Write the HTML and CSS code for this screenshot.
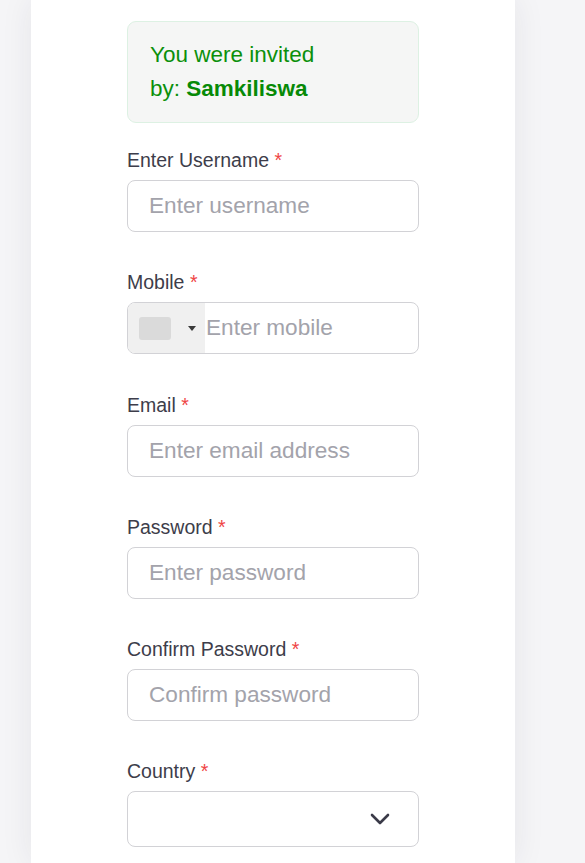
FILE: index.html
```html
<!DOCTYPE html>
<html lang="en">
<head>
<meta charset="utf-8">
<title>Register</title>
<link rel="stylesheet" href="styles.css">
</head>
<body>
<div class="page">
  <div class="card">
    <div class="form">
      <div class="invite">
        <p class="invite-line">You were invited</p>
        <p class="invite-line">by: <strong>Samkiliswa</strong></p>
      </div>

      <div class="field">
        <label class="label">Enter Username <span class="req">*</span></label>
        <div class="input"><span class="ph">Enter username</span></div>
      </div>

      <div class="field">
        <label class="label">Mobile <span class="req">*</span></label>
        <div class="input phone">
          <div class="flagbox">
            <span class="flag"></span>
            <span class="caret"></span>
          </div>
          <span class="ph tight">Enter mobile</span>
        </div>
      </div>

      <div class="field">
        <label class="label">Email <span class="req">*</span></label>
        <div class="input"><span class="ph">Enter email address</span></div>
      </div>

      <div class="field">
        <label class="label">Password <span class="req">*</span></label>
        <div class="input"><span class="ph">Enter password</span></div>
      </div>

      <div class="field">
        <label class="label">Confirm Password <span class="req">*</span></label>
        <div class="input"><span class="ph">Confirm password</span></div>
      </div>

      <div class="field">
        <label class="label">Country <span class="req">*</span></label>
        <div class="input select">
          <svg class="chev" width="20" height="12" viewBox="0 0 20 12"><path d="M2 2 L10 10 L18 2" fill="none" stroke="#3a3a48" stroke-width="2.6" stroke-linecap="round" stroke-linejoin="round"/></svg>
        </div>
      </div>
    </div>
  </div>
</div>
</body>
</html>
```

FILE: styles.css
```css
html, body {
  margin: 0;
  padding: 0;
  background: #f5f5f7;
  font-family: "Liberation Sans", Arial, sans-serif;
}
.page {
  height: 863px;
  overflow: hidden;
}
.card {
  margin-left: 31px;
  width: 484px;
  min-height: 863px;
  background: #ffffff;
  box-shadow: 0 0 30px rgba(40, 40, 70, 0.08);
}
.form {
  width: 292px;
  margin: 0 auto;
  padding-top: 21px;
}
.invite {
  background: #f5f6f5;
  border: 1px solid #ddf1e3;
  border-radius: 9px;
  padding: 16px 22px;
}
.invite-line {
  margin: 0;
  color: #0b900b;
  font-size: 22.5px;
  line-height: 34px;
}
.invite-line strong {
  font-weight: 700;
  color: #078a07;
}
.field {
  margin-top: 23px;
}
.field + .field {
  margin-top: 36.25px;
}
.label {
  display: block;
  color: #3d3d4a;
  font-size: 19.5px;
  line-height: 28px;
  margin-bottom: 6px;
}
.req {
  color: #ef4444;
}
.input {
  box-sizing: border-box;
  height: 52px;
  border: 1px solid #d2d2d6;
  border-radius: 8px;
  display: flex;
  align-items: center;
  padding: 0 21px;
  background: #fff;
  overflow: hidden;
}
.ph {
  color: #a3a3ab;
  font-size: 22.6px;
}
.phone {
  padding: 0;
}
.flagbox {
  width: 77px;
  align-self: stretch;
  background: #f0f0f0;
  display: flex;
  align-items: center;
  padding-left: 11px;
  box-sizing: border-box;
}
.flag {
  width: 32px;
  height: 23px;
  border-radius: 3px;
  background: #dadada;
}
.caret {
  margin-left: 17px;
  width: 0;
  height: 0;
  border-left: 4px solid transparent;
  border-right: 4px solid transparent;
  border-top: 5px solid #3a3a3a;
}
.tight {
  margin-left: 1px;
}
.select {
  height: 56px;
  justify-content: flex-end;
  padding-right: 28px;
}
.chev {
  display: block;
}
```
